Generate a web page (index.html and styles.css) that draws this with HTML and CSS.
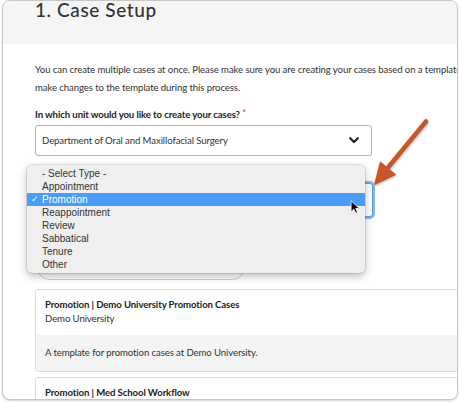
FILE: index.html
```html
<!DOCTYPE html>
<html>
<head>
<meta charset="utf-8">
<link rel="stylesheet" href="styles.css">
</head>
<body>
<div class="window">
  <div class="header"><h1 class="title">1. Case Setup</h1></div>
  <div class="content">
    <p class="intro"><span class="line">You can create multiple cases at once. Please make sure you are creating your cases based on a template as you cannot</span><span class="line">make changes to the template during this process.</span></p>
    <div class="label">In which unit would you like to create your cases? <span class="req">*</span></div>
    <div class="select">
      <span>Department of Oral and Maxillofacial Surgery</span>
      <svg class="chev" width="10" height="7" viewBox="0 0 10 7"><polyline points="1.2,1.2 5,5 8.8,1.2" fill="none" stroke="#222" stroke-width="2.2" stroke-linecap="round" stroke-linejoin="round"/></svg>
    </div>
    <div class="label type-label">What type of cases would you like to create? <span class="req">*</span></div>
    <div class="select focus"><span>Promotion</span></div>
    <div class="search"></div>
    <div class="card">
      <div class="card-head">
        <div class="card-title">Promotion | Demo University Promotion Cases</div>
        <div class="card-sub">Demo University</div>
      </div>
      <div class="card-foot">A template for promotion cases at Demo University.</div>
    </div>
    <div class="card second">
      <div class="card-head">
        <div class="card-title">Promotion | Med School Workflow</div>
      </div>
    </div>
  </div>
</div>

<div class="dropdown">
  <div class="opt">- Select Type -</div>
  <div class="opt">Appointment</div>
  <div class="opt selected">Promotion</div>
  <div class="opt">Reappointment</div>
  <div class="opt">Review</div>
  <div class="opt">Sabbatical</div>
  <div class="opt">Tenure</div>
  <div class="opt">Other</div>
</div>

<svg class="annot" width="459" height="402" viewBox="0 0 459 402">
  <defs>
    <filter id="sh" x="-20%" y="-20%" width="140%" height="140%">
      <feDropShadow dx="0.5" dy="1" stdDeviation="1" flood-color="#000" flood-opacity="0.3"/>
    </filter>
  </defs>
  <g filter="url(#sh)">
    <line x1="426" y1="121.5" x2="386" y2="170" stroke="#c9552b" stroke-width="4.5" stroke-linecap="round"/>
    <polygon points="375,184 380.5,162.5 395,174.5" fill="#c9552b" stroke="#c9552b" stroke-width="1.5" stroke-linejoin="round"/>
  </g>
</svg>

<svg class="cursor" width="10" height="14" viewBox="0 0 12 18">
  <path d="M1 1 L1 15 L4.5 11.8 L7 17 L9.3 16 L6.9 10.9 L11.5 10.9 Z" fill="#000" stroke="#fff" stroke-width="1" stroke-linejoin="round"/>
</svg>
</body>
</html>
```

FILE: styles.css
```css
html, body {
  margin: 0;
  padding: 0;
}
body {
  width: 459px;
  height: 402px;
  overflow: hidden;
  position: relative;
  background: #fff;
  font-family: Lato, "Liberation Sans", sans-serif;
  color: #333;
}
.window {
  position: relative;
  margin-left: 2px;
  width: 456px;
  height: 400px;
  box-sizing: border-box;
  border: 1px solid #c8c8c8;
  border-radius: 8px;
  overflow: hidden;
  background: #fff;
  box-shadow: 0 1px 2px rgba(0, 0, 0, 0.18);
}
.header {
  display: flex;
  align-items: flex-start;
  background: #f5f5f5;
  height: 43px;
  padding-left: 32px;
}
.title {
  margin: -2px 0 0 0;
  font-size: 19px;
  font-weight: 500;
  line-height: 22px;
  color: #333;
  letter-spacing: 0.6px;
}
.content {
  padding: 17px 0 0 32px;
  font-size: 9.6px;
  letter-spacing: -0.1px;
}
.intro {
  margin: 0;
  line-height: 18px;
  color: #333;
}
.line {
  display: block;
  white-space: nowrap;
}
.label {
  margin-top: 11px;
  line-height: 14px;
  font-weight: 700;
  color: #222;
}
.req {
  position: relative;
  top: -2px;
  color: #e04a4a;
  font-size: 9px;
}
.select {
  margin-top: 3px;
  width: 337px;
  height: 31px;
  box-sizing: border-box;
  border: 1px solid #a8b4c4;
  border-radius: 3px;
  display: flex;
  align-items: center;
  justify-content: space-between;
  padding: 0 12px 0 6px;
  color: #333;
  background: #fff;
}
.type-label {
  margin-top: 8px;
}
.select.focus {
  margin-top: 5px;
  height: 34px;
  width: 338px;
  border-color: #5a9de0;
  box-shadow: 0 0 0 2px rgba(96, 160, 240, 0.75);
}
.search {
  margin: 38px 0 0 2px;
  width: 208px;
  height: 25px;
  box-sizing: border-box;
  border: 1px solid #cfcfcf;
  border-radius: 13px;
}
.card {
  margin-top: 9px;
  width: 440px;
  border: 1px solid #dcdcdc;
  border-radius: 3px;
  background: #fff;
}
.card.second {
  margin-top: 5px;
}
.card-head {
  padding: 8px 9px 9px;
}
.card-title {
  line-height: 14px;
  font-weight: 700;
  color: #222;
}
.card-sub {
  line-height: 14px;
  color: #333;
}
.card-foot {
  background: #f4f4f4;
  padding: 11px 9px;
  line-height: 14px;
  color: #333;
}
.dropdown {
  position: absolute;
  left: 27px;
  top: 165px;
  width: 338px;
  height: 108px;
  box-sizing: border-box;
  padding-top: 2px;
  background: #efefef;
  border-radius: 5px;
  box-shadow: 0 0 0 0.5px rgba(0, 0, 0, 0.18), 0 3px 9px rgba(0, 0, 0, 0.28);
  font-family: "Liberation Sans", Arial, sans-serif;
  font-size: 10px;
  color: #333;
}
.opt {
  position: relative;
  height: 13px;
  line-height: 13px;
  padding-left: 15px;
  white-space: nowrap;
}
.opt.selected {
  background: #4b9cf7;
  color: #fff;
}
.opt.selected::before {
  content: "\2713";
  position: absolute;
  left: 4px;
  top: 0;
  font-family: "DejaVu Sans", sans-serif;
  font-size: 9px;
}
.annot {
  position: absolute;
  left: 0;
  top: 0;
  pointer-events: none;
}
.cursor {
  position: absolute;
  left: 350px;
  top: 200px;
}
```
